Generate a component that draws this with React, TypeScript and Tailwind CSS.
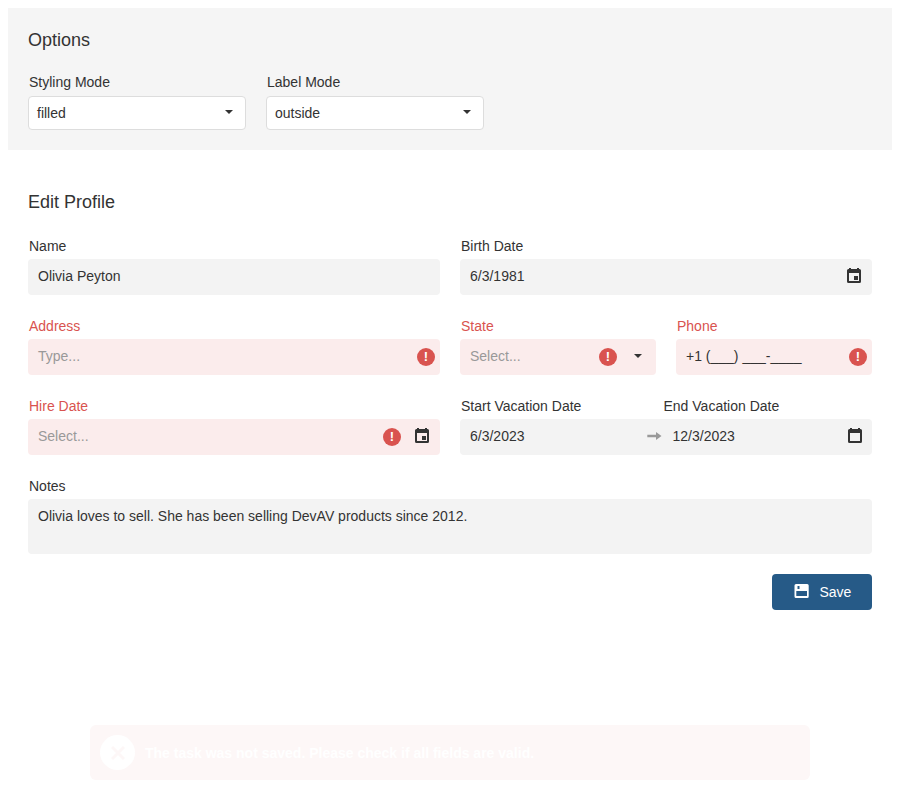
import type { ReactNode } from 'react';

function Caret() {
  return (
    <svg width="8" height="4" viewBox="0 0 8 4" className="shrink-0" fill="#333">
      <path d="M0 0h8L4 4z" />
    </svg>
  );
}

function Calendar({ event = false }: { event?: boolean }) {
  return (
    <svg width="14" height="15" viewBox="0 0 14 15" className="shrink-0" fill="#333">
      <path
        fillRule="evenodd"
        d="M2 0h2v1h6V0h2v1h.5Q14 1 14 2.500v11Q14 15 12.500 15h-11Q0 15 0 13.500v-11Q0 1 1.500 1H2zM2 5v8h10V5z"
      />
      {event && <path d="M7 8h4v4H7z" />}
    </svg>
  );
}

function Invalid() {
  return (
    <span className="flex h-[18px] w-[18px] shrink-0 items-center justify-center rounded-full bg-[#d9534f] text-[13px] font-bold leading-[18px] text-white">
      !
    </span>
  );
}

function SelectBox({ label, value }: { label: string; value: string }) {
  return (
    <div className="w-[218px]">
      <div className="h-[23px] pl-px leading-[18px]">{label}</div>
      <div className="flex h-[34px] items-center justify-between rounded border border-[#ddd] bg-white pr-3 pl-2">
        <span>{value}</span>
        <span className="pb-[2px]"><Caret /></span>
      </div>
    </div>
  );
}

type FieldProps = {
  label: string;
  value?: string;
  placeholder?: string;
  invalid?: boolean;
  className?: string;
  children?: ReactNode;
};

function Field({ label, value, placeholder, invalid, className = '', children }: FieldProps) {
  return (
    <div className={className}>
      <div className={`h-[22px] pl-px leading-[18px] ${invalid ? 'text-[#d9534f]' : ''}`}>{label}</div>
      <div className={`flex h-9 items-center rounded pl-[10px] ${invalid ? 'bg-[#fbecec]' : 'bg-[#f3f3f3]'}`}>
        <span className={`flex-1 pb-[2px] leading-[18px] ${value ? '' : 'text-[#999]'}`}>{value ?? placeholder}</span>
        {children}
      </div>
    </div>
  );
}

export default function App() {
  return (
    <div className="relative h-[800px] w-[900px] overflow-hidden bg-white p-2 font-['Liberation_Sans',Arial,sans-serif] text-sm text-[#333]">
      <section className="h-[142px] bg-[#f5f5f5] px-5 pt-5">
        <h2 className="h-[45px] text-lg leading-6">Options</h2>
        <div className="flex gap-5">
          <SelectBox label="Styling Mode" value="filled" />
          <SelectBox label="Label Mode" value="outside" />
        </div>
      </section>

      <main className="px-5 pt-10">
        <h2 className="h-[47px] text-lg leading-6">Edit Profile</h2>
        <div className="grid grid-cols-[412px_196px_196px] gap-x-5 gap-y-[22px]">
          <Field label="Name" value="Olivia Peyton" />
          <Field label="Birth Date" value="6/3/1981" className="col-span-2">
            <span className="mr-[11px] pb-[3px]"><Calendar event /></span>
          </Field>
          <Field label="Address" placeholder="Type..." invalid>
            <span className="mr-[5px]"><Invalid /></span>
          </Field>
          <Field label="State" placeholder="Select..." invalid>
            <Invalid />
            <span className="mr-[14px] ml-[17px] pb-[2px]"><Caret /></span>
          </Field>
          <Field label="Phone" value="+1 (___) ___-____" invalid>
            <span className="mr-[5px]"><Invalid /></span>
          </Field>
          <Field label="Hire Date" placeholder="Select..." invalid>
            <Invalid />
            <span className="mr-[11px] ml-[14px] pb-[3px]"><Calendar event /></span>
          </Field>
          <div className="col-span-2">
            <div className="flex h-[22px] pl-px leading-[18px]">
              <span className="w-[202.5px]">Start Vacation Date</span>
              <span>End Vacation Date</span>
            </div>
            <div className="flex h-9 items-center rounded bg-[#f3f3f3] pl-[10px]">
              <span className="w-[177px] pb-[2px] leading-[18px]">6/3/2023</span>
              <svg width="15" height="8" viewBox="0 0 15 8" className="mb-[2px] shrink-0" fill="#999">
                <path d="M.3 2.800h8.700V0L14.500 4 9 8V5.200H.3z" />
              </svg>
              <span className="ml-[10.500px] flex-1 pb-[2px] leading-[18px]">12/3/2023</span>
              <span className="mr-[10px] pb-[3px]"><Calendar /></span>
            </div>
          </div>
        </div>
        <div className="mt-[22px]">
          <div className="h-[22px] pl-px leading-[18px]">Notes</div>
          <div className="h-[55px] rounded bg-[#f3f3f3] px-[10px] pt-2 leading-[18px]">
            Olivia loves to sell. She has been selling DevAV products since 2012.
          </div>
        </div>
        <div className="mt-5 flex justify-end">
          <button className="flex h-9 w-[100px] items-center rounded bg-[#265a87] pl-[22px] text-white">
            <svg width="15" height="14" viewBox="0 0 15 14" className="mb-[2px]" fill="#fff">
              <path
                fillRule="evenodd"
                d="M2 0h11.200Q14.700 0 14.700 1.500v11q0 1.500-1.500 1.500H2Q.5 14 .5 12.500v-11Q.5 0 2 0M3.500 2v3h2V2zM2.300 7v5H13V7z"
              />
            </svg>
            <span className="ml-[10.500px] leading-[18px]">Save</span>
          </button>
        </div>
      </main>

      <div className="absolute top-[725px] left-[90px] flex h-[55px] w-[720px] items-center rounded-md bg-[#fdf7f7] pl-[10px] font-bold text-white">
        <span className="flex h-[35px] w-[35px] items-center justify-center rounded-full bg-white">
          <svg width="14" height="14" viewBox="0 0 14 14" fill="none" stroke="#fdf7f7" strokeWidth="3">
            <path d="M1 1l12 12M13 1L1 13" />
          </svg>
        </span>
        <span className="ml-[10px]">The task was not saved. Please check if all fields are valid.</span>
      </div>
    </div>
  );
}
